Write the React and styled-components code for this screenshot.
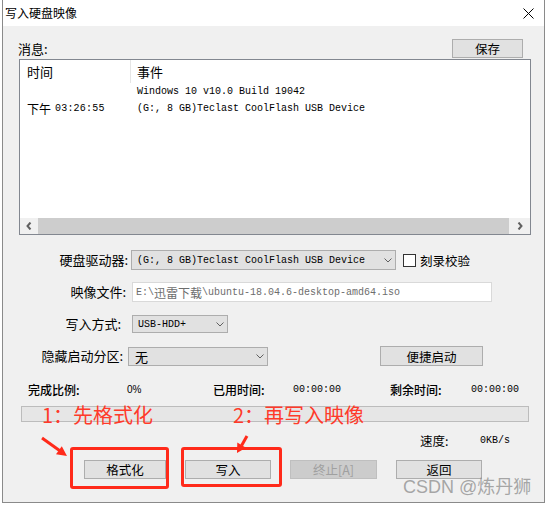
import React from 'react';
import styled, { createGlobalStyle } from 'styled-components';

const ui = `"Noto Sans CJK SC", "Microsoft YaHei", sans-serif`;
const mono = `"Liberation Mono", "Noto Sans CJK SC", monospace`;

const Global = createGlobalStyle`
  html, body { margin: 0; padding: 0; background: #fff; }
  body { width: 549px; height: 506px; overflow: hidden; font-family: ${ui}; color: #000; }
  * { box-sizing: border-box; }
`;

const Page = styled.div`
  padding-left: 2px;
  height: 506px;
`;

const Window = styled.div`
  position: relative;
  width: 543px;
  height: 503px;
  border: 1px solid #8a8a8a;
  border-top: none;
  background: #f0f0f0;
  display: flex;
  flex-direction: column;
`;

const TitleBar = styled.div`
  height: 26px;
  background: #fff;
  display: flex;
  align-items: center;
  justify-content: space-between;
  padding: 0 10px 0 2px;
`;

const TitleText = styled.span`
  font-size: 12px;
  line-height: 16px;
`;

const Body = styled.div`
  flex: 1;
  display: flex;
  flex-direction: column;
`;

const MsgBar = styled.div`
  display: flex;
  align-items: center;
  justify-content: space-between;
  padding: 13px 21px 0 15px;
  height: 32px;
`;

const Label = styled.span`
  font-size: ${p => p.$size || 13}px;
  line-height: 19px;
  white-space: nowrap;
`;

const Button = styled.div`
  width: ${p => p.$w}px;
  height: ${p => p.$h || 19}px;
  margin-left: ${p => p.$ml || 0}px;
  border: 1px solid ${p => (p.$disabled ? '#bfbfbf' : '#adadad')};
  background: ${p => (p.$disabled ? '#cccccc' : '#e1e1e1')};
  color: ${p => (p.$disabled ? '#a0a0a0' : '#000')};
  font-size: 12.5px;
  display: flex;
  align-items: center;
  justify-content: center;
  white-space: nowrap;
  flex: none;
`;

const ListBox = styled.div`
  margin: 1px 13px 0 16px;
  height: 176px;
  border: 1px solid #828790;
  background: #fff;
  display: flex;
  flex-direction: column;
`;

const ListHeader = styled.div`
  height: 23px;
  display: grid;
  grid-template-columns: 111px 1fr;
`;

const HeaderCell = styled.div`
  font-size: 13px;
  line-height: 23px;
  padding-left: ${p => p.$pl}px;
  border-right: ${p => (p.$divider ? '1px solid #e5e5e5' : 'none')};
`;

const ListRows = styled.div`
  flex: 1;
`;

const ListRow = styled.div`
  height: 17px;
  display: grid;
  grid-template-columns: 111px 1fr;
  align-items: center;
`;

const Cell = styled.div`
  padding-left: ${p => p.$pl}px;
  font-family: ${mono};
  font-size: 10px;
  white-space: nowrap;
  display: flex;
  align-items: center;
`;

const TimeCjk = styled.span`
  font-family: ${ui};
  font-size: 12px;
  margin-right: 4px;
`;

const TimeDigits = styled.span`
  font-family: ${mono};
  font-size: 10px;
  letter-spacing: 0.2px;
`;

const HScroll = styled.div`
  height: 16px;
  display: flex;
  background: #f0f0f0;
`;

const ArrowBox = styled.div`
  width: ${p => p.$w}px;
  display: flex;
  align-items: center;
  justify-content: center;
  flex: none;
`;

const Thumb = styled.div`
  flex: 1;
  background: #cdcdcd;
`;

const Form = styled.div`
  margin-top: 15px;
  display: flex;
  flex-direction: column;
  gap: 12px;
`;

const Row = styled.div`
  height: 20px;
  display: flex;
  align-items: center;
`;

const FieldLabel = styled.div`
  width: ${p => p.$w}px;
  text-align: right;
  font-size: 13px;
  line-height: 20px;
  white-space: nowrap;
  flex: none;
`;

const Select = styled.div`
  width: ${p => p.$w}px;
  height: ${p => p.$h}px;
  margin-left: ${p => p.$ml}px;
  border: 1px solid #adadad;
  background: #e1e1e1;
  display: flex;
  align-items: center;
  justify-content: space-between;
  padding: 0 ${p => p.$pr || 3}px 0 5px;
  font-family: ${mono};
  font-size: 10px;
  white-space: nowrap;
  flex: none;
`;

const SelectUiText = styled.span`
  font-family: ${ui};
  font-size: 13px;
  margin-left: 1px;
`;

const CheckBox = styled.div`
  width: 13px;
  height: 13px;
  margin-left: 7px;
  border: 1px solid #333;
  background: #fff;
  flex: none;
`;

const CheckLabel = styled.span`
  margin-left: 4px;
  font-size: 12.5px;
  white-space: nowrap;
`;

const Input = styled.div`
  width: ${p => p.$w}px;
  height: 20px;
  margin-left: ${p => p.$ml}px;
  border: 1px solid #d9d9d9;
  background: #fff;
  padding-left: 3px;
  display: flex;
  align-items: center;
  color: #6d6d6d;
  font-family: ${mono};
  font-size: 10px;
  white-space: nowrap;
  flex: none;
`;

const InputCjk = styled.span`
  font-family: ${ui};
  font-size: 12px;
`;

const StatusRow = styled.div`
  margin-top: 15px;
  height: 16px;
  padding-left: 25px;
  display: grid;
  grid-template-columns: 99px 86px 80px 97px 81px auto;
  align-items: center;
`;

const StatusLabel = styled.span`
  font-size: 12px;
  font-weight: 500;
  white-space: nowrap;
`;

const Value = styled.span`
  font-family: ${p => (p.$sans ? `"Liberation Sans", sans-serif` : mono)};
  font-size: 10px;
  white-space: nowrap;
`;

const Progress = styled.div`
  margin: 9px 0 0 18px;
  width: 508px;
  height: 16px;
  border: 1px solid #bcbcbc;
  background: #e6e6e6;
`;

const SpeedRow = styled.div`
  margin-top: 9px;
  height: 14px;
  padding-left: 417px;
  display: grid;
  grid-template-columns: 60px auto;
  align-items: center;
`;

const SpeedLabel = styled.span`
  font-size: 12.5px;
`;

const ButtonRow = styled.div`
  margin-top: 15px;
  padding-left: 81px;
  display: flex;
  gap: 19px;
`;

const Note = styled.div`
  position: absolute;
  left: ${p => p.$x}px;
  top: ${p => p.$y}px;
  font-size: 20px;
  line-height: 20px;
  color: #ff3a2a;
  white-space: nowrap;
  pointer-events: none;
`;

const RedBox = styled.div`
  position: absolute;
  left: ${p => p.$x}px;
  top: ${p => p.$y}px;
  width: ${p => p.$w}px;
  height: ${p => p.$h}px;
  border: 3px solid #ff2a1a;
  border-radius: 3px;
  pointer-events: none;
`;

const ArrowLayer = styled.svg`
  position: absolute;
  left: 0;
  top: 0;
  width: 541px;
  height: 502px;
  pointer-events: none;
`;

const Watermark = styled.div`
  position: absolute;
  left: 400px;
  top: 475px;
  font-family: "Liberation Sans", "Noto Sans CJK SC", sans-serif;
  font-size: 18px;
  line-height: 24px;
  color: rgba(140, 140, 140, 0.75);
  white-space: nowrap;
  pointer-events: none;
`;

const Chevron = () => (
  <svg width="8" height="5" viewBox="0 0 8 5">
    <polyline points="0.5,0.5 4,4 7.5,0.5" fill="none" stroke="#606060" strokeWidth="1" />
  </svg>
);

const ScrollArrow = ({ dir }) => (
  <svg width="6" height="8" viewBox="0 0 6 8">
    <polyline
      points={dir === 'left' ? '4.5,0.5 1.5,4 4.5,7.5' : '1.5,0.5 4.5,4 1.5,7.5'}
      fill="none"
      stroke="#606060"
      strokeWidth="2"
    />
  </svg>
);

const CloseIcon = () => (
  <svg width="11" height="11" viewBox="0 0 11 11">
    <path d="M0.5 0.5 L10.5 10.5 M10.5 0.5 L0.5 10.5" stroke="#000" strokeWidth="1" />
  </svg>
);

export default function App() {
  return (
    <Page>
      <Global />
      <Window>
        <TitleBar>
          <TitleText>写入硬盘映像</TitleText>
          <CloseIcon />
        </TitleBar>
        <Body>
          <MsgBar>
            <Label>消息:</Label>
            <Button $w={71}>保存</Button>
          </MsgBar>
          <ListBox>
            <ListHeader>
              <HeaderCell $pl={7} $divider>时间</HeaderCell>
              <HeaderCell $pl={6}>事件</HeaderCell>
            </ListHeader>
            <ListRows>
              <ListRow>
                <Cell $pl={7} />
                <Cell $pl={6}>Windows 10 v10.0 Build 19042</Cell>
              </ListRow>
              <ListRow>
                <Cell $pl={7}>
                  <TimeCjk>下午</TimeCjk>
                  <TimeDigits>03:26:55</TimeDigits>
                </Cell>
                <Cell $pl={6}>(G:, 8 GB)Teclast CoolFlash USB Device</Cell>
              </ListRow>
            </ListRows>
            <HScroll>
              <ArrowBox $w={18}><ScrollArrow dir="left" /></ArrowBox>
              <Thumb />
              <ArrowBox $w={21}><ScrollArrow dir="right" /></ArrowBox>
            </HScroll>
          </ListBox>

          <Form>
            <Row>
              <FieldLabel $w={125}>硬盘驱动器:</FieldLabel>
              <Select $w={265} $h={20} $ml={3} $pr={3}>
                <span>(G:, 8 GB)Teclast CoolFlash USB Device</span>
                <Chevron />
              </Select>
              <CheckBox />
              <CheckLabel>刻录校验</CheckLabel>
            </Row>
            <Row>
              <FieldLabel $w={123}>映像文件:</FieldLabel>
              <Input $w={360} $ml={6}>
                E:\<InputCjk>迅雷下载</InputCjk>\ubuntu-18.04.6-desktop-amd64.iso
              </Input>
            </Row>
            <Row>
              <FieldLabel $w={118}>写入方式:</FieldLabel>
              <Select $w={96} $h={18} $ml={11} $pr={3}>
                <span>USB-HDD+</span>
                <Chevron />
              </Select>
            </Row>
            <Row>
              <FieldLabel $w={120}>隐藏启动分区:</FieldLabel>
              <Select $w={140} $h={19} $ml={5} $pr={3}>
                <SelectUiText>无</SelectUiText>
                <Chevron />
              </Select>
              <Button $w={103} $h={20} $ml={112}>便捷启动</Button>
            </Row>
          </Form>

          <StatusRow>
            <StatusLabel>完成比例:</StatusLabel>
            <Value $sans>0%</Value>
            <StatusLabel>已用时间:</StatusLabel>
            <Value>00:00:00</Value>
            <StatusLabel>剩余时间:</StatusLabel>
            <Value>00:00:00</Value>
          </StatusRow>

          <Progress />

          <SpeedRow>
            <SpeedLabel>速度:</SpeedLabel>
            <Value>0KB/s</Value>
          </SpeedRow>

          <ButtonRow>
            <Button $w={82}>格式化</Button>
            <Button $w={86}>写入</Button>
            <Button $w={87} $disabled>终止[A]</Button>
            <Button $w={86}>返回</Button>
          </ButtonRow>
        </Body>

        <Note $x={39} $y={405}>1：先格式化</Note>
        <Note $x={230} $y={405}>2：再写入映像</Note>
        <RedBox $x={67} $y={447} $w={99} $h={42} />
        <RedBox $x={178} $y={447} $w={101} $h={40} />
        <ArrowLayer viewBox="0 0 541 502">
          <line x1="39" y1="438" x2="56.5" y2="450.5" stroke="#ff2a1a" strokeWidth="3" />
          <polygon points="64,456 53,454.3 58.8,446.2" fill="#ff2a1a" />
          <line x1="244" y1="436" x2="238.6" y2="445.5" stroke="#ff2a1a" strokeWidth="3" />
          <polygon points="234,453 234.3,442.6 242.9,447.8" fill="#ff2a1a" />
        </ArrowLayer>
        <Watermark>CSDN @炼丹狮</Watermark>
      </Window>
    </Page>
  );
}
